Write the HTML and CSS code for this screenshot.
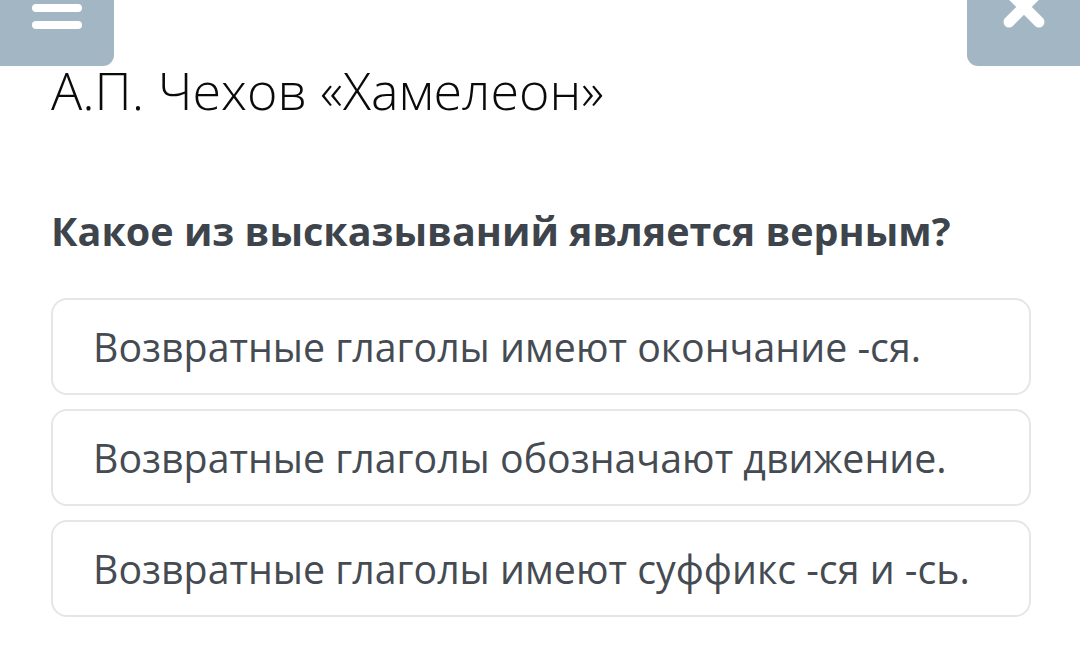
FILE: index.html
```html
<!DOCTYPE html>
<html lang="ru">
<head>
<meta charset="utf-8">
<link rel="stylesheet" href="styles.css">
</head>
<body>
<div class="topbar">
  <div class="btn btn-menu">
    <svg width="114" height="66" viewBox="0 0 114 66"><rect x="32" y="-13" width="50" height="8" rx="4" fill="#fff"/><rect x="32" y="4" width="50" height="8" rx="4" fill="#fff"/><rect x="32" y="21" width="50" height="8" rx="4" fill="#fff"/></svg>
  </div>
  <div class="btn btn-close">
    <svg width="113" height="66" viewBox="0 0 113 66"><path d="M42 -8 L72 22 M72 -8 L42 22" stroke="#fff" stroke-width="11" stroke-linecap="round"/></svg>
  </div>
</div>
<main class="content">
  <h1 class="title">А.П. Чехов «Хамелеон»</h1>
  <h2 class="question">Какое из высказываний является верным?</h2>
  <div class="options">
    <div class="option">Возвратные глаголы имеют окончание -ся.</div>
    <div class="option">Возвратные глаголы обозначают движение.</div>
    <div class="option">Возвратные глаголы имеют суффикс -ся и -сь.</div>
  </div>
</main>
</body>
</html>
```
FILE: styles.css
```css
html, body { margin: 0; padding: 0; background: #fff; }
body { width: 1080px; height: 658px; overflow: hidden; font-family: "Open Sans", sans-serif; position: relative; }
.topbar { position: absolute; top: 0; left: 0; right: 0; display: flex; justify-content: space-between; }
.btn { background: #a2b6c3; height: 66px; }
.btn svg { display: block; }
.btn-menu { width: 114px; border-bottom-right-radius: 11px; }
.btn-close { width: 113px; border-bottom-left-radius: 11px; }
.content { padding: 55px 49px 0 51px; }
.title { margin: 0; font-weight: 300; font-size: 52px; line-height: 70px; color: #0a0a0a; white-space: nowrap; }
.question { margin: 81px 0 0; font-weight: 700; font-size: 39.5px; line-height: 50px; color: #3e444b; white-space: nowrap; }
.options { margin-top: 42px; display: flex; flex-direction: column; gap: 14px; }
.option { border: 2px solid #e5e6e7; border-radius: 16px; box-sizing: border-box; height: 97px; display: flex; align-items: center; padding-left: 40px; font-size: 39.3px; color: #454b52; white-space: nowrap; }
```
